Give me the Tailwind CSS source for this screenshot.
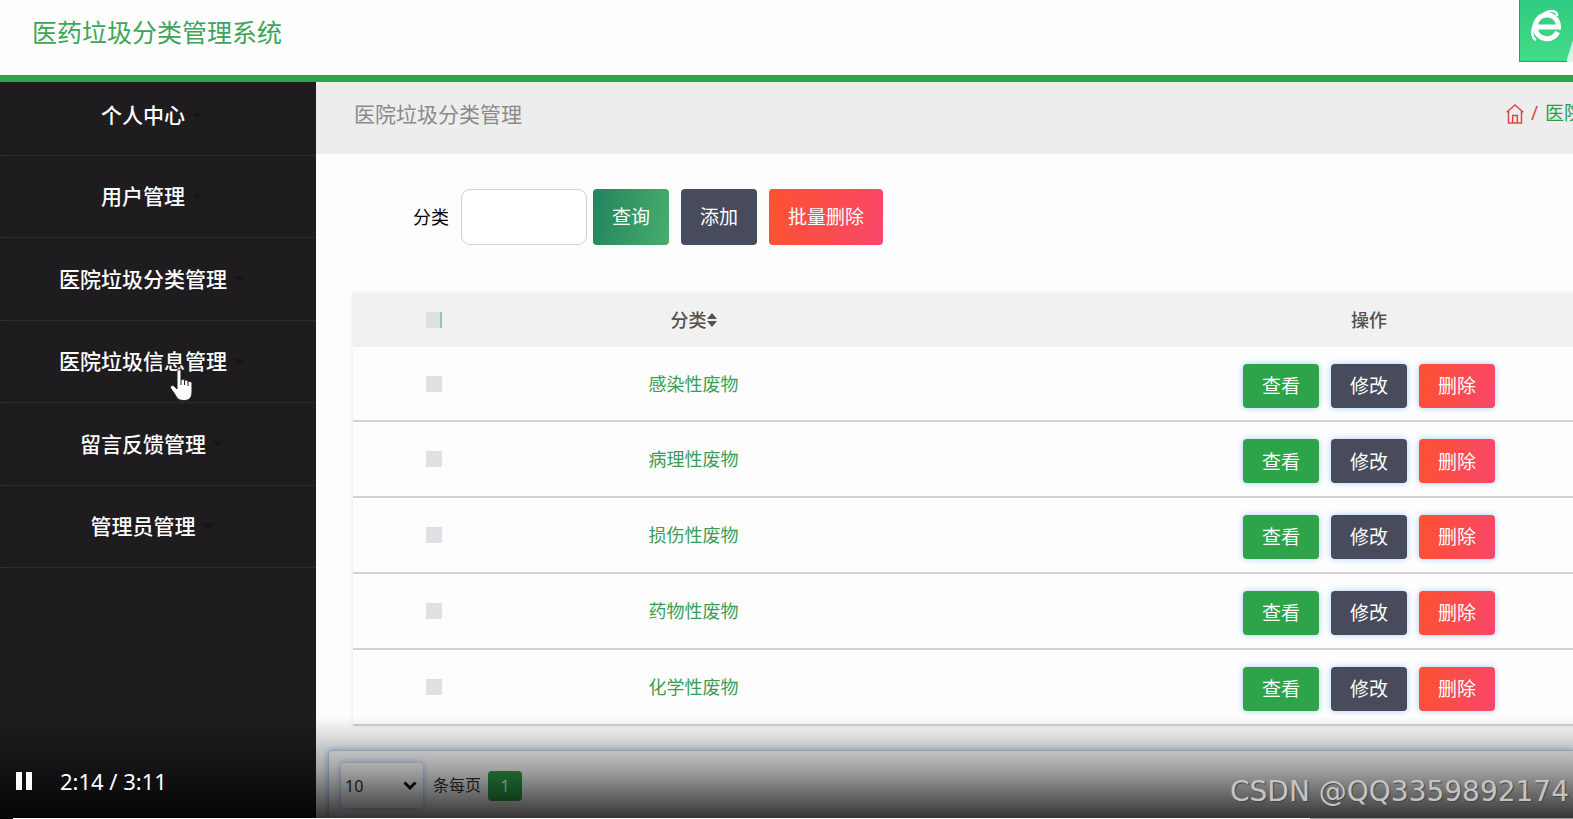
<!DOCTYPE html>
<html lang="zh-CN">
<head>
<meta charset="utf-8">
<meta name="viewport" content="width=device-width, initial-scale=1">
<title>医药垃圾分类管理系统</title>
<script src="https://cdn.jsdelivr.net/npm/@tailwindcss/browser@4"></script>
</head>
<body class="relative flex h-screen flex-col overflow-hidden bg-[#fdfdfd] font-['Noto_Sans','Noto_Sans_CJK_SC',sans-serif] text-lg">
<header class="flex h-[82px] shrink-0 items-center border-b-[7px] border-[#2ea44a] bg-[#fefefe] pb-3 pl-8">
  <h1 class="font-['Noto_Sans_CJK_SC',sans-serif] text-[25px] text-[#3fa458]">医药垃圾分类管理系统</h1>
</header>

<div class="flex min-h-0 grow">
  <nav class="w-[316px] shrink-0 bg-[#1e1c1f] text-[21px] font-medium text-white" aria-label="主菜单">
    <ul id="menu" class="flex h-[486px] flex-col"></ul>
  </nav>

  <main class="flex min-w-0 grow flex-col overflow-hidden">
    <div class="flex h-[72px] shrink-0 items-center justify-between bg-[#ededee] pb-2 pl-[38px]">
      <h2 class="text-[21px] text-[#8a8a8a]">医院垃圾分类管理</h2>
      <ol class="flex w-[67px] items-center gap-[7px] overflow-hidden whitespace-nowrap text-[19px]">
        <li><a href="#" aria-label="首页" class="block text-[#e04848]">
          <svg class="h-5 w-[18px]" viewBox="0 0 18 20" fill="none" stroke="currentColor" stroke-width="1.5"><path d="M.7 8.3 9 1l8.300 7.300M2.500 7v12h13V7M6.700 19v-7.500h4.600V19"/></svg>
        </a></li>
        <li class="text-[#e04848]">/</li>
        <li><a href="#" class="text-[#2b9c48]">医院垃圾分类管理</a></li>
      </ol>
    </div>

    <form class="flex shrink-0 items-center pt-[35px] pl-[97px]" onsubmit="return false">
      <label for="kind" class="mr-3 text-black">分类</label>
      <input id="kind" type="text" class="mr-1.5 h-14 w-[126px] rounded-[9px] border border-[#d2d2d8] bg-white px-3">
      <button class="mr-3 h-14 rounded bg-linear-[100deg] from-[#21845e] to-[#48ad6d] px-[19px] pt-0.5 text-[19px] text-white">查询</button>
      <button class="mr-3 h-14 rounded bg-[#474b5b] px-[19px] pt-0.5 text-[19px] text-white">添加</button>
      <button class="h-14 rounded bg-linear-[100deg] from-[#fd5230] to-[#f9476a] px-[19px] pt-0.5 text-[19px] text-white">批量删除</button>
    </form>

    <div class="mt-12 ml-[37px] shrink-0">
      <table class="h-[433px] w-[1512px] table-fixed border-collapse text-center shadow-[0_0_4px_#e4e8f2]">
        <colgroup><col class="w-[161px]"><col class="w-[359px]"><col></colgroup>
        <thead class="bg-[#f1f1f1] text-[#55504c]">
          <tr class="h-[54px]">
            <th><input type="checkbox" aria-label="全选" class="block mx-auto size-4 appearance-none border-r-2 border-[#8ccaa8] bg-[#dfe0e4]"></th>
            <th class="font-medium"><span class="inline-flex items-center">分类<svg class="h-4 w-2.5" viewBox="0 0 10 16" fill="currentColor"><path d="M0 7 5 1l5 6zM0 9h10l-5 6z"/></svg></span></th>
            <th class="font-medium">操作</th>
          </tr>
        </thead>
        <tbody id="rows"></tbody>
      </table>
    </div>

    <div class="mt-6 ml-3 flex grow items-start rounded-tl border-t border-l border-[#b9d3ef] pt-3 pl-3 text-base text-[#333] shadow-[0_0_6px_#8fbdf0]">
      <div class="relative mr-2.5">
        <select aria-label="每页条数" class="h-[45px] w-[82px] appearance-none rounded bg-white pl-1 shadow-[0_0_6px_#8fbdf0]"><option>10</option><option>20</option></select>
        <svg class="pointer-events-none absolute top-[18px] right-1.5 h-2.5 w-3.5" viewBox="0 0 14 10" fill="none" stroke="#111" stroke-width="3"><path d="m1.500 1.500 5.500 5.500 5.500-5.500"/></svg>
      </div>
      <span class="mr-[7px] leading-[45px]">条每页</span>
      <button class="mt-2 h-[30px] w-[34px] rounded bg-[#2ea44a] text-white">1</button>
    </div>
  </main>
</div>

<!-- Corner badge of the browser extension -->
<svg class="absolute top-0 right-0 h-[62px] w-[54px]" viewBox="0 0 54 62" role="img" aria-label="浏览器">
  <defs><linearGradient id="badge" x1="0" y1="0" x2="0" y2="1"><stop offset="0" stop-color="#2fcb80"/><stop offset="1" stop-color="#43dc88"/></linearGradient></defs>
  <path fill="url(#badge)" d="M0 0h54v62H0z"/>
  <path fill="#d5f7e5" d="M54 40v22h-7z"/>
  <path fill="none" stroke="#2a9c60" d="M.5 0v61.500H48"/>
  <path fill="none" stroke="#fff" stroke-width="5" d="M17 27h22.500c0-16-23-16-23 0 0 14 18 15 22 5"/>
  <path fill="none" stroke="#fff" stroke-width="2.500" d="M18 19c-6 9-6 19-1 21M24 14c8-5 15-3 14 2"/>
</svg>

<!-- Mouse pointer -->
<svg class="absolute top-[368px] left-[169px] h-[34px] w-[26px]" viewBox="0 0 26 34" fill="#fff" stroke="#1e1c1f" stroke-width="1"><path d="M8 3.500C8 1 12 1 12 3.500V12c1-1.500 3.500-1 3.500.8 1-1.200 3.500-.8 3.500 1 1-1 4-.5 4 1.700V24c0 6-3 8.500-8 8.500-5 0-7-2-9-6L1.500 20C1 17.500 4 16.500 6 19l2 2z"/><path fill="none" d="M12 12v5M15.500 13v4M19 14v4"/></svg>

<!-- Video player controls -->
<div class="absolute inset-x-0 bottom-0 flex h-[102px] flex-col justify-end bg-linear-to-b from-transparent via-black/35 to-black/80">
  <div class="flex items-end justify-between pr-1">
    <div class="flex items-center gap-7 pb-4 pl-4 text-[22px] text-white">
      <button aria-label="暂停"><svg class="h-[18px] w-4" viewBox="0 0 16 18" fill="#fff"><path d="M0 0h6v18H0zM10 0h6v18h-6z"/></svg></button>
      <span>2:14 / 3:11</span>
    </div>
    <span class="font-['DejaVu_Sans',sans-serif] text-[28px] text-[#c4c4c4] [text-shadow:1px_1px_1px_#444]">CSDN @QQ3359892174</span>
  </div>
  <div class="mt-1 flex h-px bg-[#999]"><div class="w-[13px] bg-black"></div><div class="w-[1297px] bg-white"></div></div>
</div>

<script>
  const menu = ['个人中心', '用户管理', '医院垃圾分类管理', '医院垃圾信息管理', '留言反馈管理', '管理员管理'];
  document.getElementById('menu').innerHTML = menu.map((name, i) => `
    <li class="${i ? 'flex-1' : 'h-[74px]'} border-b border-dotted border-[#3a383d]">
      <a href="#" class="${i ? '' : 'pb-1.5'} flex h-full items-center justify-center gap-1.5 pr-3">${name}
        <svg class="h-1.5 w-3" viewBox="0 0 12 6" fill="#161517"><path d="M0 0h12L6 6z"/></svg></a>
    </li>`).join('');

  const kinds = ['感染性废物', '病理性废物', '损伤性废物', '药物性废物', '化学性废物'];
  document.getElementById('rows').innerHTML = kinds.map(kind => `
    <tr class="border-b-2 border-[#d2d2d2]">
      <td><input type="checkbox" aria-label="${kind}" class="block mx-auto size-4 appearance-none bg-[#dfe0e4]"></td>
      <td class="text-[#3a9d55]">${kind}</td>
      <td><div class="flex justify-center gap-3 pt-1 text-[19px] text-white">
        <button class="h-11 rounded bg-[#2ea44a] px-[19px] pt-0.5 shadow-[0_0_6px_#a9cdf5]">查看</button>
        <button class="h-11 rounded bg-[#474b5b] px-[19px] pt-0.5 shadow-[0_0_6px_#a9cdf5]">修改</button>
        <button class="h-11 rounded bg-linear-[100deg] from-[#fd5230] to-[#f9476a] px-[19px] pt-0.5 shadow-[0_0_6px_#a9cdf5]">删除</button>
      </div></td>
    </tr>`).join('');
</script>
</body>
</html>
